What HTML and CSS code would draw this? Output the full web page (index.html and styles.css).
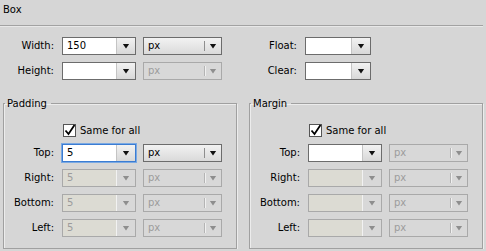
FILE: index.html
```html
<!DOCTYPE html>
<html lang="en">
<head>
    <meta charset="UTF-8">
    <title>Box</title>
    <link rel="stylesheet" href="styles.css">
</head>
<body>
    <div class="title">Box</div>

    <div class="grid">
        <label>Width:</label>
        <div class="combo"><span class="val">150</span><span class="btn"><i class="arrow"></i></span></div>
        <div class="select"><span class="val">px</span><span class="btn"><i class="arrow"></i></span></div>
        <label>Float:</label>
        <div class="combo"><span class="val"></span><span class="btn"><i class="arrow"></i></span></div>

        <label>Height:</label>
        <div class="combo"><span class="val"></span><span class="btn"><i class="arrow"></i></span></div>
        <div class="select off"><span class="val">px</span><span class="btn"><i class="arrow"></i></span></div>
        <label>Clear:</label>
        <div class="combo"><span class="val"></span><span class="btn"><i class="arrow"></i></span></div>
    </div>

    <div class="sections">
        <fieldset class="group">
            <legend>Padding</legend>
            <div class="inner">
                <div class="same"><span class="check"><svg width="13" height="13" viewBox="0 0 13 13"><path d="M2.5 6.5 L5.5 10 L11.5 1" fill="none" stroke="#000" stroke-width="1.8"/></svg></span>Same for all</div>

                <label>Top:</label>
                <div class="combo focus"><span class="val">5</span><span class="btn"><i class="arrow"></i></span></div>
                <div class="select"><span class="val">px</span><span class="btn"><i class="arrow"></i></span></div>

                <label>Right:</label>
                <div class="combo off"><span class="val">5</span><span class="btn"><i class="arrow"></i></span></div>
                <div class="select off"><span class="val">px</span><span class="btn"><i class="arrow"></i></span></div>

                <label>Bottom:</label>
                <div class="combo off"><span class="val">5</span><span class="btn"><i class="arrow"></i></span></div>
                <div class="select off"><span class="val">px</span><span class="btn"><i class="arrow"></i></span></div>

                <label>Left:</label>
                <div class="combo off"><span class="val">5</span><span class="btn"><i class="arrow"></i></span></div>
                <div class="select off"><span class="val">px</span><span class="btn"><i class="arrow"></i></span></div>
            </div>
        </fieldset>

        <fieldset class="group">
            <legend>Margin</legend>
            <div class="inner">
                <div class="same"><span class="check"><svg width="13" height="13" viewBox="0 0 13 13"><path d="M2.5 6.5 L5.5 10 L11.5 1" fill="none" stroke="#000" stroke-width="1.8"/></svg></span>Same for all</div>

                <label>Top:</label>
                <div class="combo"><span class="val"></span><span class="btn"><i class="arrow"></i></span></div>
                <div class="select off"><span class="val">px</span><span class="btn"><i class="arrow"></i></span></div>

                <label>Right:</label>
                <div class="combo off"><span class="val"></span><span class="btn"><i class="arrow"></i></span></div>
                <div class="select off"><span class="val">px</span><span class="btn"><i class="arrow"></i></span></div>

                <label>Bottom:</label>
                <div class="combo off"><span class="val"></span><span class="btn"><i class="arrow"></i></span></div>
                <div class="select off"><span class="val">px</span><span class="btn"><i class="arrow"></i></span></div>

                <label>Left:</label>
                <div class="combo off"><span class="val"></span><span class="btn"><i class="arrow"></i></span></div>
                <div class="select off"><span class="val">px</span><span class="btn"><i class="arrow"></i></span></div>
            </div>
        </fieldset>
    </div>
</body>
</html>
```

FILE: styles.css
```css
body {
    margin: 0;
    background: #d6d6d6;
    font: 10px "DejaVu Sans", sans-serif;
    color: #000;
}
.title {
    height: 26px;
    box-sizing: border-box;
    padding: 4px 3px 0;
    line-height: 12px;
    border-bottom: 1px solid #a2a2a2;
    box-shadow: 0 1px 0 #e8e8e8;
    margin-right: 3px;
}
.grid {
    display: grid;
    grid-template-columns: 55px 74px 79px 69px 66px;
    grid-auto-rows: 18px;
    gap: 7px;
    margin-top: 11px;
}
label {
    text-align: right;
    line-height: 18px;
    padding-right: 1px;
}
.combo, .select {
    display: flex;
    height: 18px;
    box-sizing: border-box;
    border: 1px solid #6c6c6c;
}
.combo {
    background: #fff;
}
.select {
    background: linear-gradient(#f2f2f2, #dadada);
}
.val {
    flex: 1;
    padding-left: 4px;
    line-height: 16px;
}
.btn {
    display: flex;
    align-items: center;
    justify-content: center;
}
.combo .btn {
    width: 18px;
    border-left: 1px solid #c4c4c4;
    background: linear-gradient(#f2f2f2, #d8d8d8);
}
.select .btn {
    width: 16px;
    margin: 3px 0;
    border-left: 1px solid #8e8e8e;
}
.arrow {
    width: 7px;
    height: 5px;
    background: #111;
    clip-path: polygon(0 0, 100% 0, 50% 100%);
}
.combo.focus {
    border-color: #3b7cd2;
    box-shadow: 0 0 0 1px #7aa9e3;
}
.off {
    border-color: #a9a9a9;
    color: #9c9c9c;
}
.off .arrow {
    background: #8e8e8e;
}
.combo.off {
    background: #dcdbd3;
}
.combo.off .btn {
    border-left-color: #f2f2f2;
    background: #d8d8d8;
}
.select.off {
    background: #d8d8d8;
}
.select.off .btn {
    border-left-color: #b4b4b4;
    box-shadow: inset 1px 0 0 #f0f0f0;
}
.sections {
    display: flex;
    gap: 12px;
    padding: 0 3px;
    margin-top: 17px;
}
.group {
    width: 234px;
    box-sizing: border-box;
    margin: 0;
    padding: 0 0 11px;
    min-width: 0;
    border: 1px solid #a0a0a0;
    box-shadow: inset 1px 1px 0 #ececec, 1px 1px 0 #ececec;
}
legend {
    margin-left: 1px;
    padding: 0 4px 0 2px;
    line-height: 13px;
}
.inner {
    display: grid;
    grid-template-columns: 51px 74px 79px;
    grid-template-rows: 13px repeat(4, 18px);
    gap: 7px;
    margin-top: 14px;
}
.same {
    grid-column: 2 / 4;
    display: flex;
    align-items: center;
    gap: 4px;
    line-height: 13px;
    padding-left: 1px;
}
.check {
    width: 13px;
    height: 13px;
    box-sizing: border-box;
    border: 1px solid #555;
    background: #fff;
    display: flex;
    overflow: visible;
}
.check svg {
    margin: -1px;
}
```
